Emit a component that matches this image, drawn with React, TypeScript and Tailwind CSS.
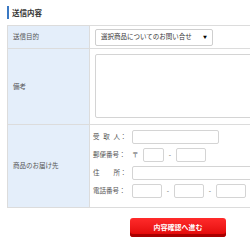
export default function App() {
  const input = "h-[14px] border border-[#d4d4d4] rounded-[2px] bg-white";
  return (
    <div className="w-[250px] h-[250px] overflow-hidden bg-white text-[#555] font-['Noto_Sans_CJK_JP',sans-serif]">
      <div className="pt-[6px] pl-[7px]">
        <h2 className="border-l-[2px] border-[#3a78c3] pl-[3px] text-[7.5px] leading-[13px] font-bold text-[#333]">
          送信内容
        </h2>
      </div>

      <div className="mt-[6px] ml-[7px] w-[320px] border-t border-l border-[#dcdcdc] text-[6.5px] whitespace-nowrap">
        {/* 送信目的 */}
        <div className="flex h-[23px] border-b border-[#dcdcdc]">
          <div className="w-[82px] shrink-0 bg-[#e4eefa] border-r border-[#dcdcdc] pl-[5px] flex items-center">
            送信目的
          </div>
          <div className="pl-[5px] flex items-center">
            <div className="h-[17px] w-[118px] border border-[#cfcfcf] rounded-[2px] flex items-center justify-between pl-[5px] pr-[5px] text-[#333]">
              <span>選択商品についてのお問い合せ</span>
              <span className="text-[4px] text-black">▼</span>
            </div>
          </div>
        </div>

        {/* 備考 */}
        <div className="flex h-[76px] border-b border-[#dcdcdc]">
          <div className="w-[82px] shrink-0 bg-[#e4eefa] border-r border-[#dcdcdc] pl-[5px] flex items-center">
            備考
          </div>
          <div className="pl-[5px] pt-[5px]">
            <div className="h-[64px] w-[200px] border border-[#d4d4d4] rounded-[2px]" />
          </div>
        </div>

        {/* 商品のお届け先 */}
        <div className="flex h-[83px] border-b border-[#dcdcdc]">
          <div className="w-[82px] shrink-0 bg-[#e4eefa] border-r border-[#dcdcdc] pl-[5px] flex items-center">
            商品のお届け先
          </div>
          <div className="pl-[3px] pt-[5px] flex flex-col gap-[4px]">
            <div className="flex items-center">
              <span className="w-[39px] flex">
                <span className="w-[27px] flex justify-between">
                  <span>受</span>
                  <span>取</span>
                  <span>人</span>
                </span>
                <span>：</span>
              </span>
              <div className={`${input} w-[87px]`} />
            </div>
            <div className="flex items-center">
              <span className="w-[39px]">郵便番号：</span>
              <span className="w-[11px]">〒</span>
              <div className={`${input} w-[21px]`} />
              <span className="w-[12px] text-center">-</span>
              <div className={`${input} w-[30px]`} />
            </div>
            <div className="flex items-center">
              <span className="w-[39px] flex">
                <span className="w-[27px] flex justify-between">
                  <span>住</span>
                  <span>所</span>
                </span>
                <span>：</span>
              </span>
              <div className={`${input} w-[150px]`} />
            </div>
            <div className="flex items-center">
              <span className="w-[39px]">電話番号：</span>
              <div className={`${input} w-[30px]`} />
              <span className="w-[12px] text-center">-</span>
              <div className={`${input} w-[30px]`} />
              <span className="w-[12px] text-center">-</span>
              <div className={`${input} w-[30px]`} />
            </div>
          </div>
        </div>
      </div>

      <div className="ml-[130px] mt-[10px] w-[96px] h-[19px] rounded-[3px] bg-gradient-to-b from-[#ff2a2a] to-[#e00000] shadow-[inset_0_-3px_0_#a80000] flex items-center justify-center text-white font-bold text-[7px]">
        内容確認へ進む
      </div>
    </div>
  );
}
